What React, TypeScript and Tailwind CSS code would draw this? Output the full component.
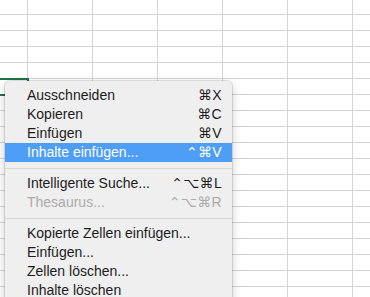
import React from 'react'

type Item = { label: string; keys?: string; disabled?: boolean; active?: boolean } | 'sep'

const items: Item[] = [
  { label: 'Ausschneiden', keys: '⌘X' },
  { label: 'Kopieren', keys: '⌘C' },
  { label: 'Einfügen', keys: '⌘V' },
  { label: 'Inhalte einfügen...', keys: '⌃⌘V', active: true },
  'sep',
  { label: 'Intelligente Suche...', keys: '⌃⌥⌘L' },
  { label: 'Thesaurus...', keys: '⌃⌥⌘R', disabled: true },
  'sep',
  { label: 'Kopierte Zellen einfügen...' },
  { label: 'Einfügen...' },
  { label: 'Zellen löschen...' },
  { label: 'Inhalte löschen' },
]

const rows = Array.from({ length: 19 })
const cols = [28, 65, 65, 65, 65, 65, 65]

export default function App() {
  return (
    <div className="relative w-[370px] h-[297px] overflow-hidden bg-white font-['Liberation_Sans',Arial,sans-serif]">
      {/* sheet grid */}
      <div className="flex flex-col">
        {rows.map((_, r) => (
          <div key={r} className={`flex shrink-0 border-b border-[#d4d4d4] ${r === 0 ? 'h-[15px]' : 'h-[16px]'}`}>
            {cols.map((w, c) => (
              <div key={c} className="shrink-0 border-r border-[#d4d4d4]" style={{ width: w }} />
            ))}
          </div>
        ))}
      </div>

      {/* selected cell */}
      <div className="absolute left-[-10px] top-[78px] w-[39px] h-[18px] border-2 border-[#217346]" />

      {/* context menu */}
      <div className="absolute left-[5px] top-[81px] w-[227px] h-[240px] pt-[5px] rounded-[5px] bg-[#efefef] shadow-[0_0_0_1px_rgba(0,0,0,0.1),0_3px_10px_rgba(0,0,0,0.22)] text-[14px] leading-[19px] text-[#1c1c1c]">
        {items.map((it, i) =>
          it === 'sep' ? (
            <div key={i} className="h-[12px] flex items-center">
              <div className="h-px w-full bg-[#d8d8d8]" />
            </div>
          ) : (
            <div
              key={i}
              className={`h-[19px] flex items-center justify-between pl-[22px] pr-[10px] ${
                it.active ? 'bg-[#4e9ef6] text-white' : it.disabled ? 'text-[#ababab]' : ''
              }`}
            >
              <span>{it.label}</span>
              {it.keys && (
                <span className="font-['Liberation_Sans','DejaVu_Sans',sans-serif] tracking-[0.3px]">{it.keys}</span>
              )}
            </div>
          )
        )}
      </div>
    </div>
  )
}
